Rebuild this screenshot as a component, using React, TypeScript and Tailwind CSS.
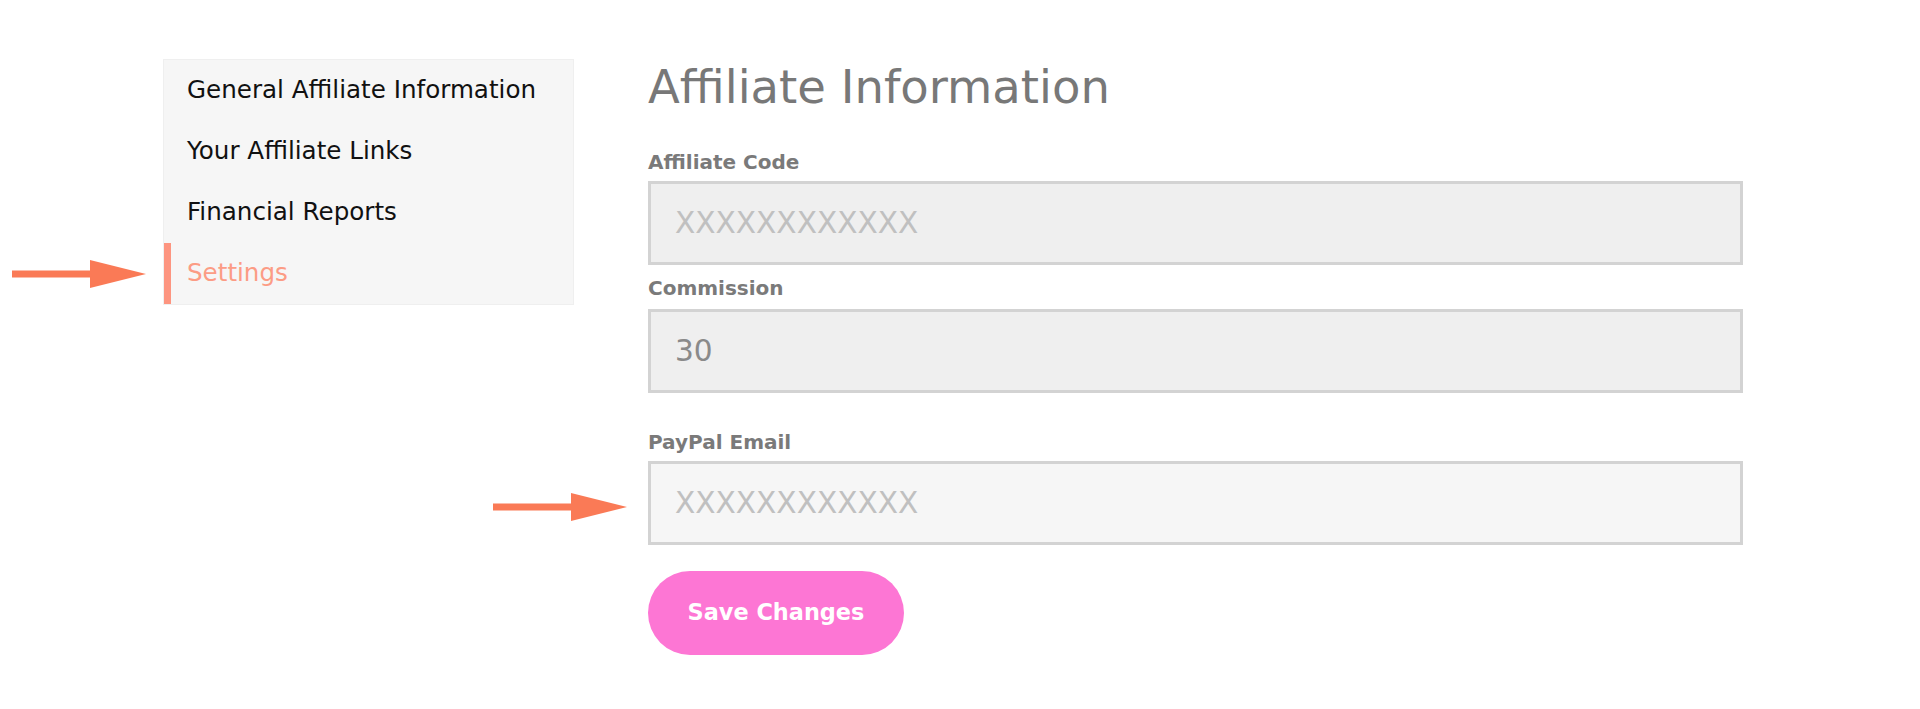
import { useState } from "react"

const navItems = ["General Affiliate Information", "Your Affiliate Links", "Financial Reports", "Settings"]

function Arrow({ className }: { className: string }) {
  return (
    <svg className={className} width="134" height="28" viewBox="0 0 134 28" fill="none">
      <rect x="0" y="10.5" width="80" height="7" fill="#fa7a56" />
      <path d="M78 0 L134 14 L78 28 Z" fill="#fa7a56" />
    </svg>
  )
}

function Field({ label, value, muted, light, gap }: { label: string; value: string; muted?: boolean; light?: boolean; gap: string }) {
  return (
    <div className="flex flex-col">
      <label className={`text-[20px] font-bold text-[#7a7a7a] leading-[24px] ${gap}`}>{label}</label>
      <div
        className={`h-[84px] border-[3px] border-[#d3d3d3] flex items-center pl-[24px] text-[29.6px] ${
          light ? "bg-[#f6f6f6]" : "bg-[#efefef]"
        } ${muted ? "text-[#c0c0c0]" : "text-[#8a8a8a]"}`}
      >
        {value}
      </div>
    </div>
  )
}

export default function App() {
  const [active, setActive] = useState(3)

  return (
    <div className="relative w-[1920px] h-[709px] bg-white font-['DejaVu_Sans',sans-serif]">
      <Arrow className="absolute left-[12px] top-[260px]" />
      <Arrow className="absolute left-[493px] top-[493px]" />

      <div className="flex pl-[163px] pt-[59px] gap-[74px]">
        <nav className="w-[411px] self-start bg-[#f6f6f6] border border-[#efefef]">
          {navItems.map((item, i) => (
            <button
              key={item}
              onClick={() => setActive(i)}
              className={`w-full h-[61px] flex items-center text-left pl-[16px] text-[24.6px] border-l-[7px] ${
                active === i ? "border-[#fd9580] text-[#fc9c85]" : "border-transparent text-[#111]"
              }`}
            >
              {item}
            </button>
          ))}
        </nav>

        <div className="w-[1095px] flex flex-col">
          <h1 className="text-[46.5px] leading-[54px] text-[#787878] mt-[1px] mb-[36px]">Affiliate Information</h1>
          <Field label="Affiliate Code" value="XXXXXXXXXXXX" muted gap="mb-[7px]" />
          <div className="mt-[11px]">
            <Field label="Commission" value="30" gap="mb-[9px]" />
          </div>
          <div className="mt-[37px]">
            <Field label="PayPal Email" value="XXXXXXXXXXXX" muted light gap="mb-[7px]" />
          </div>
          <button className="mt-[26px] w-[256px] h-[84px] rounded-full bg-[#fd76d4] text-white text-[22.4px] font-bold">
            Save Changes
          </button>
        </div>
      </div>
    </div>
  )
}
